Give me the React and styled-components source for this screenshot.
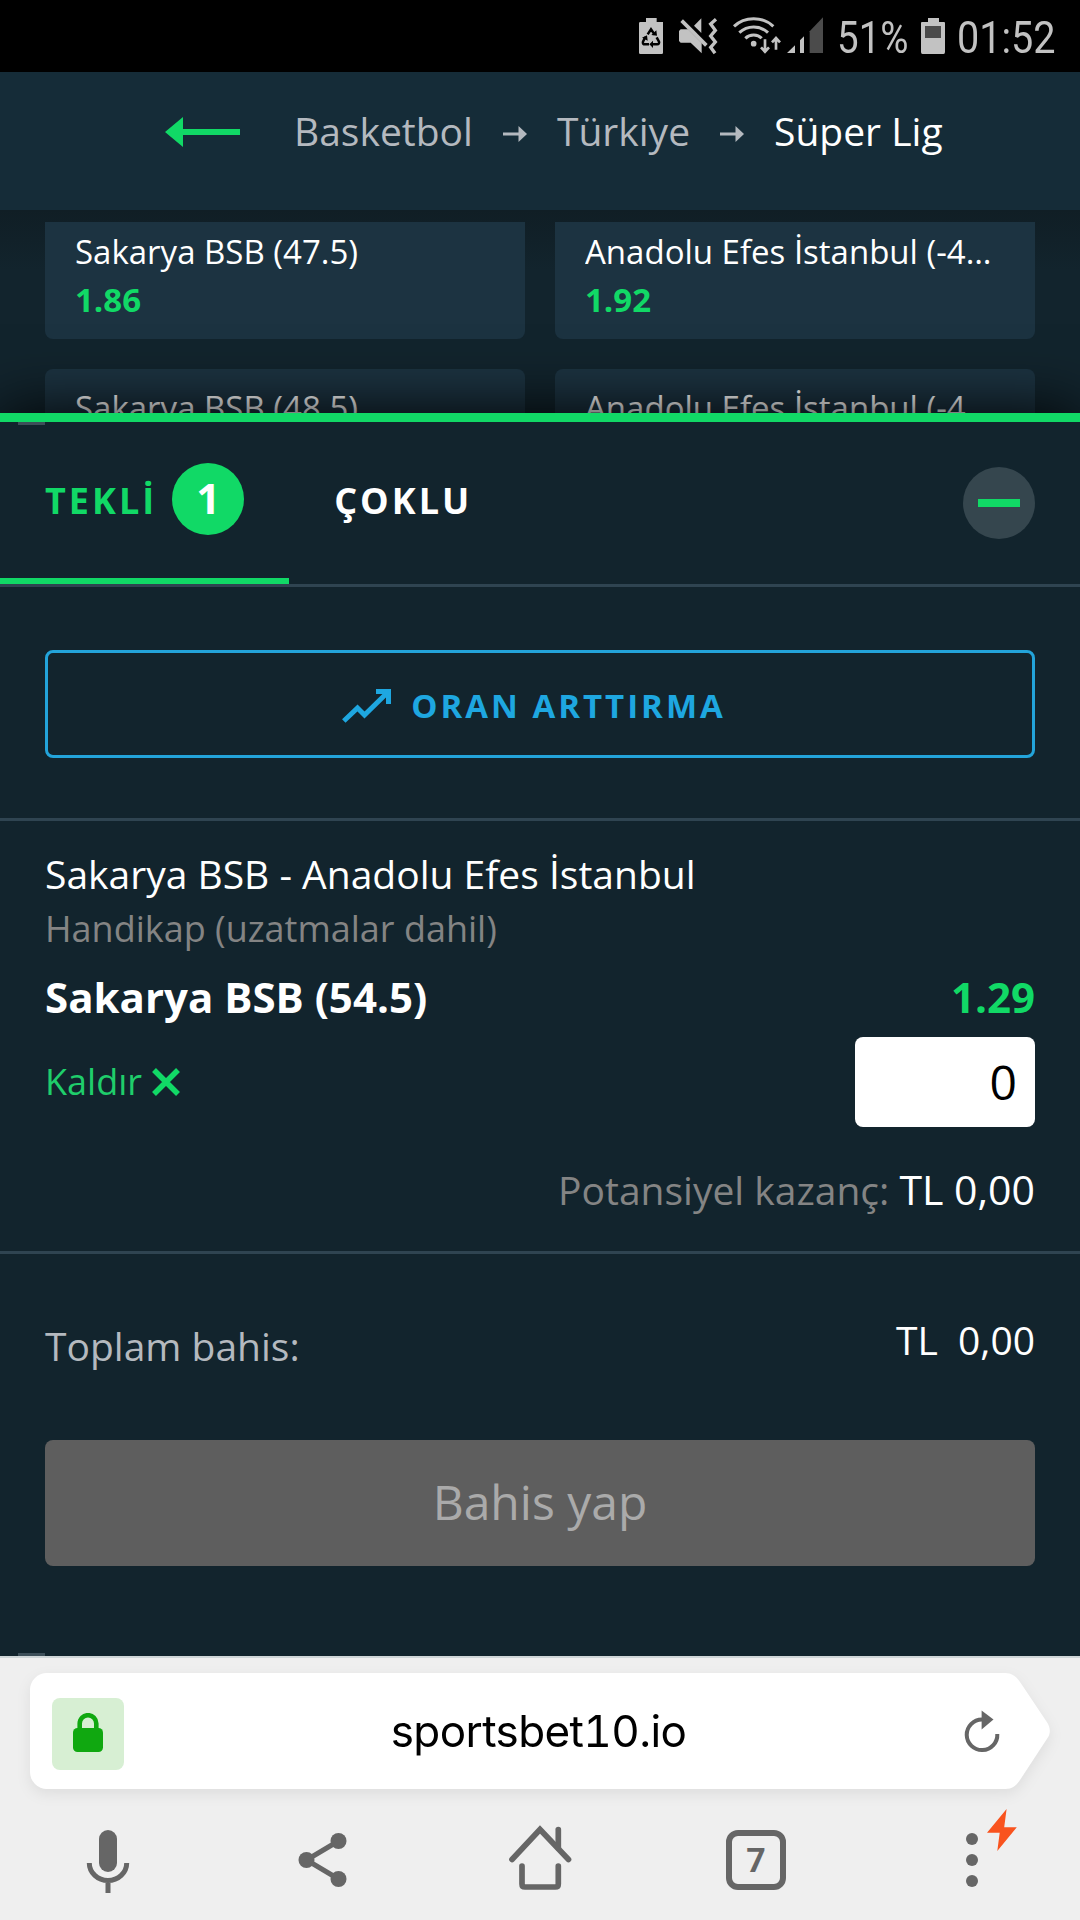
import React from 'react'
import styled, { createGlobalStyle } from 'styled-components'

const GlobalStyle = createGlobalStyle`
* {
  box-sizing: border-box;
}
body {
  margin: 0;
  background: #12242d;
  font-family: 'Open Sans', 'Noto Sans', sans-serif;
}
`

const odds = [
  { name: 'Sakarya BSB (47.5)', value: '1.86' },
  { name: 'Anadolu Efes İstanbul (-47.5)', value: '1.92' },
  { name: 'Sakarya BSB (48.5)', value: '1.82' },
  { name: 'Anadolu Efes İstanbul (-48.5)', value: '1.96' },
]

function StatusIcons() {
  return (
    <svg width="186" height="72" viewBox="54 0 558 216" fill="#c2c2c2">
      <path d="M78 54H110V66H129V158Q129 162 125 162H61Q57 162 57 158V70Q57 66 61 66H78Z" />
      <path
        d="M83 103L93 88L104 104M76 111L69 125Q67 133 75 133H87M98 133H111Q119 132 117 125L110 112"
        fill="none"
        stroke="#000"
        strokeWidth="7.5"
      />
      <path fill="#000" d="M94 105L111 107L109 91ZM99 122V144L88 133ZM66 113L81 106L83 122Z" />
      <path d="M222 77L244 55V99Z" />
      <path d="M185 62L259 136" stroke="#c2c2c2" strokeWidth="11" />
      <path d="M177 93L182 88H204L245 129V160L212 128H182L177 123Z" />
      <path d="M288 58L272 72L286 91L272 108L286 126L272 142L285 160" fill="none" stroke="#c2c2c2" strokeWidth="10" />
      <g fill="none" stroke="#c2c2c2" strokeWidth="9">
        <path d="M342 79Q366 56 401 56Q436 56 460 79" />
        <path d="M358 98Q376 81 401 81Q426 81 444 98" />
        <path d="M376 115Q386 105 401 105Q416 105 425 115" />
      </g>
      <circle cx="401" cy="131" r="8.5" />
      <path d="M435 118V154M423 142L435 155L447 142" fill="none" stroke="#c2c2c2" strokeWidth="8" />
      <path d="M468 149V114M456 127L468 114L480 127" fill="none" stroke="#c2c2c2" strokeWidth="8" />
      <path d="M501 159L525 136V159ZM540 121L552 109V159H540Z" />
      <path d="M569 94L609 52V159H569Z" fill="#4b4b4b" />
    </svg>
  )
}

function BatteryIcon() {
  return (
    <svg width="24" height="36" viewBox="0 0 24 36">
      <path d="M7 0H18V4H23Q24 4 24 5V34Q24 36 22.500 36H1.500Q0 36 0 34V5Q0 4 1 4H7Z" fill="#c2c2c2" />
      <path d="M4 8H20V20H4Z" fill="#4b4b4b" />
    </svg>
  )
}

function BackArrow() {
  return (
    <svg width="75" height="30" viewBox="0 0 75 30" fill="#11d966">
      <path d="M0 15L18 0V12H75V18H18V30Z" />
    </svg>
  )
}

function CrumbArrow() {
  return (
    <svg width="24" height="16" viewBox="0 0 24 16" fill="#b4b9bf">
      <path d="M0 6.500H15.500V0L24 8L15.500 16V9.500H0Z" />
    </svg>
  )
}

function TrendIcon() {
  return (
    <svg width="49" height="34" viewBox="0 0 49 34">
      <path d="M1.800 32L15.500 19L22.500 26L46 3" fill="none" stroke="#1ea7e0" strokeWidth="5" />
      <path d="M34 0H49V15H44V8.500L40.500 5H34Z" fill="#1ea7e0" />
    </svg>
  )
}

function CrossIcon() {
  return (
    <svg width="28" height="28" viewBox="0 0 28 28">
      <path d="M2 2L26 26M26 2L2 26" stroke="#11d966" strokeWidth="5.500" />
    </svg>
  )
}

function LockIcon() {
  return (
    <svg width="30" height="39" viewBox="0 0 30 39">
      <path d="M6.700 16V10.500A8.300 8.300 0 0 1 23.300 10.500V16" fill="none" stroke="#10a810" strokeWidth="4.600" />
      <rect y="15" width="30" height="24" rx="4.500" fill="#10a810" />
    </svg>
  )
}

function ReloadIcon() {
  return (
    <svg width="36" height="44" viewBox="0 0 36 44">
      <path d="M18 9.500A15.300 15.300 0 1 0 33.300 24" fill="none" stroke="#666" strokeWidth="4" />
      <path d="M17.600 0.500L29.500 9.500L17.600 19.500Z" fill="#666" />
    </svg>
  )
}

function MicIcon() {
  return (
    <svg width="72" height="72" viewBox="0 0 72 72">
      <rect x="27" y="6" width="18" height="42" rx="9" fill="#666" />
      <path d="M17.300 39A18.700 17.500 0 0 0 54.700 39M36 57V69" fill="none" stroke="#666" strokeWidth="5" />
    </svg>
  )
}

function ShareIcon() {
  return (
    <svg width="72" height="72" viewBox="0 0 72 72" fill="#666">
      <path d="M50.500 17L18.500 36L50.500 55" fill="none" stroke="#666" strokeWidth="5" />
      <circle cx="50.500" cy="17" r="8" />
      <circle cx="18.500" cy="36" r="8" />
      <circle cx="50.500" cy="55" r="8" />
    </svg>
  )
}

function HomeIcon() {
  return (
    <svg width="72" height="72" viewBox="0 0 72 72">
      <g fill="none" stroke="#666" strokeWidth="5.700" strokeLinecap="round">
        <path d="M8 35.500L36 5.500L64.500 35.500" />
        <path d="M54.300 5.500V24" />
        <path d="M18 42V60Q18 63 21 63H51.300Q54.300 63 54.300 60V42" />
      </g>
    </svg>
  )
}

function DotsIcon() {
  return (
    <svg width="12" height="54" viewBox="0 0 12 54" fill="#666">
      <circle cx="6" cy="6" r="6" />
      <circle cx="6" cy="27" r="6" />
      <circle cx="6" cy="48" r="6" />
    </svg>
  )
}

function BoltIcon() {
  return (
    <svg width="30" height="42" viewBox="0 0 30 42">
      <path d="M19.600 0L0 23.700H12.700L10.300 42L29.800 18.300H17.200Z" fill="#f9531e" />
    </svg>
  )
}

export default function App() {
  return (
    <Screen>
      <GlobalStyle />
      <StatusBar>
        <StatusIcons />
        <StatusText $width={84} $scale={0.865}>51%</StatusText>
        <BatteryIcon />
        <StatusText $width={112} $scale={0.89}>01:52</StatusText>
      </StatusBar>

      <Header>
        <BackArrow />
        <Breadcrumb>
          <Crumb>Basketbol</Crumb>
          <CrumbArrow />
          <Crumb>Türkiye</Crumb>
          <CrumbArrow />
          <Crumb $active>Süper Lig</Crumb>
        </Breadcrumb>
      </Header>

      <OddsArea>
        <OddsGrid>
          {odds.map((o) => (
            <OddsCard key={o.name}>
              <OddsName>{o.name}</OddsName>
              <OddsValue>{o.value}</OddsValue>
            </OddsCard>
          ))}
        </OddsGrid>
      </OddsArea>

      <BetSlip>
        <Tabs>
          <Tab $active>
            TEKLİ
            <Badge>1</Badge>
          </Tab>
          <Tab>ÇOKLU</Tab>
          <Minimize><span /></Minimize>
        </Tabs>

        <BoostSection>
          <BoostButton>
            <TrendIcon />
            ORAN ARTTIRMA
          </BoostButton>
        </BoostSection>

        <Selection>
          <Match>Sakarya BSB - Anadolu Efes İstanbul</Match>
          <Market>Handikap (uzatmalar dahil)</Market>
          <Pick>
            <span>Sakarya BSB (54.5)</span>
            <PickOdds>1.29</PickOdds>
          </Pick>
          <StakeRow>
            <Remove>
              Kaldır
              <CrossIcon />
            </Remove>
            <Stake defaultValue="0" />
          </StakeRow>
          <Potential>
            Potansiyel kazanç: <b>TL 0,00</b>
          </Potential>
        </Selection>

        <Summary>
          <TotalRow>
            <TotalLabel>Toplam bahis:</TotalLabel>
            <Total>TL&nbsp; 0,00</Total>
          </TotalRow>
          <PlaceBet>Bahis yap</PlaceBet>
        </Summary>
      </BetSlip>

      <Browser>
        <AddressBar>
          <AddressBody>
            <LockTile><LockIcon /></LockTile>
            <Url>sportsbet10.io</Url>
          </AddressBody>
          <svg width="50" height="116" viewBox="0 0 50 116" fill="#fff">
            <path d="M0 0H5C11 0 16 3 20 9L47.500 50C50.500 55 50.500 61 47.500 65L20 107C16 113 12 116 5 116H0Z" />
          </svg>
          <Reload><ReloadIcon /></Reload>
        </AddressBar>
        <NavBar>
          <NavItem><MicIcon /></NavItem>
          <NavItem><ShareIcon /></NavItem>
          <NavItem><HomeIcon /></NavItem>
          <NavItem><TabCount>7</TabCount></NavItem>
          <NavItem>
            <DotsIcon />
            <BoltMark><BoltIcon /></BoltMark>
          </NavItem>
        </NavBar>
      </Browser>
    </Screen>
  )
}

const Screen = styled.main`
width: 1080px;
height: 1920px;
overflow: hidden;
display: flex;
flex-direction: column;
background: #12242d;
color: #fff;

svg {
  display: block;
  flex: none;
}
`
const StatusBar = styled.div`
height: 72px;
flex: none;
display: flex;
align-items: center;
padding-left: 638px;
background: #000;
`
const StatusText = styled.span`
font: 44.500px/44px Roboto, sans-serif;
color: #c2c2c2;
white-space: nowrap;
flex: none;
width: ${(p) => p.$width}px;
margin: 4px 0 0 13px;
transform: scaleX(${(p) => p.$scale});
transform-origin: left center;

&:last-child {
  margin-left: 12px;
}
`
const Header = styled.header`
height: 138px;
flex: none;
display: flex;
align-items: center;
padding: 0 0 19px 165px;
background: #152c38;
`
const Breadcrumb = styled.nav`
display: flex;
align-items: center;
gap: 30px;
margin: -2px 0 0 54px;

svg {
  margin-top: 6px;
}
`
const Crumb = styled.span`
font-size: 39px;
line-height: 54px;
white-space: nowrap;
color: ${(p) => (p.$active ? '#fff' : '#b4b9bf')};
`
const OddsArea = styled.section`
height: 203px;
flex: none;
padding-top: 12px;
background: linear-gradient(#101e25, #12242d 60px);
`
const OddsGrid = styled.div`
height: 191px;
overflow: hidden;
display: grid;
grid-template-columns: 480px 480px;
grid-auto-rows: 126px;
gap: 30px;
padding: 0 45px;
`
const OddsCard = styled.div`
height: 126px;
margin-top: -9px;
padding: 15px 30px;
border-radius: 8px;
background: #1c3341;
`
const OddsName = styled.div`
font-size: 33px;
line-height: 48px;
white-space: nowrap;
overflow: hidden;
text-overflow: ellipsis;
`
const OddsValue = styled.div`
font-size: 33px;
line-height: 48px;
font-weight: 700;
color: #11d966;
`
const BetSlip = styled.section`
position: relative;
height: 1243px;
flex: none;
border-top: 9px solid #11d966;
background: #12242d;
box-shadow: 0 0 60px #000;

&::before,
&::after {
  content: '';
  position: absolute;
  left: 18px;
  width: 27px;
  height: 3px;
  background: #3d4f59;
}
&::before {
  top: 0;
}
&::after {
  bottom: 0;
}
`
const Tabs = styled.div`
height: 165px;
display: flex;
align-items: center;
padding-right: 45px;
border-bottom: 3px solid #2f4451;
`
const Tab = styled.div`
height: 162px;
display: flex;
align-items: center;
padding: 0 45px;
font-size: 36px;
font-weight: 700;
letter-spacing: 3px;
color: ${(p) => (p.$active ? '#11d966' : '#fff')};
border-bottom: 6px solid ${(p) => (p.$active ? '#11d966' : 'transparent')};
`
const Badge = styled.span`
width: 72px;
height: 72px;
margin: -2px 0 0 15px;
border-radius: 50%;
background: #11d966;
color: #fff;
font-size: 42px;
line-height: 69px;
letter-spacing: 0;
text-align: center;
`
const Minimize = styled.button`
width: 72px;
height: 72px;
margin-left: auto;
padding: 0;
display: flex;
align-items: center;
justify-content: center;
border: 0;
border-radius: 50%;
background: #35464e;

span {
  width: 42px;
  height: 8px;
  background: #11d966;
}
`
const BoostSection = styled.div`
padding: 63px 45px 60px;
border-bottom: 3px solid #2f4451;
`
const BoostButton = styled.button`
width: 100%;
height: 108px;
display: flex;
align-items: center;
justify-content: center;
gap: 20px;
padding: 4px 12px 0 0;
border: 3px solid #23a4da;
border-radius: 8px;
background: none;
color: #1ea7e0;
font: 700 33px/48px 'Open Sans', sans-serif;
letter-spacing: 3px;
`
const Selection = styled.div`
height: 433px;
padding: 26px 45px 0;
border-bottom: 3px solid #2f4451;
`
const Match = styled.div`
font-size: 39px;
line-height: 54px;
`
const Market = styled.div`
margin-top: 1px;
font-size: 36px;
line-height: 54px;
color: #848484;
`
const Pick = styled.div`
display: flex;
justify-content: space-between;
margin-top: 11px;
font-size: 42px;
line-height: 60px;
font-weight: 700;
`
const PickOdds = styled.span`
color: #11d966;
`
const StakeRow = styled.div`
display: flex;
align-items: center;
justify-content: space-between;
margin-top: 10px;
`
const Remove = styled.span`
display: flex;
align-items: center;
gap: 10px;
font-size: 36px;
line-height: 54px;
color: #1fce6b;
`
const Stake = styled.input`
width: 180px;
height: 90px;
padding: 0 18px 2px;
border: 0;
border-radius: 8px;
background: #fff;
color: #000;
font: 48px 'Open Sans', sans-serif;
text-align: right;
`
const Potential = styled.div`
margin-top: 36px;
font-size: 39px;
line-height: 54px;
text-align: right;
color: #848484;

b {
  font-size: 41px;
  font-weight: 400;
  line-height: 1;
  color: #fff;
}
`
const Summary = styled.div`
padding: 59px 45px 0;
`
const TotalRow = styled.div`
display: flex;
justify-content: space-between;
font-size: 39px;
line-height: 54px;
`
const TotalLabel = styled.span`
padding-top: 6px;
color: #b4b9bf;
`
const Total = styled.span`
color: #fff;
`
const PlaceBet = styled.button`
width: 100%;
height: 126px;
margin-top: 67px;
padding: 0 0 4px;
border: 0;
border-radius: 8px;
background: #5e5e5e;
color: #aaa;
font: 48px 'Open Sans', sans-serif;
`
const Browser = styled.footer`
position: relative;
height: 264px;
flex: none;
padding: 15px 30px 0;
border-top: 2px solid #cfd6d8;
background: #efefef;
`
const AddressBar = styled.div`
position: relative;
display: flex;
filter: drop-shadow(0 5px 7px rgba(0, 0, 0, 0.07));
`
const AddressBody = styled.div`
width: 970px;
height: 116px;
display: flex;
align-items: center;
padding-left: 22px;
border-radius: 17px 0 0 17px;
background: #fff;
`
const LockTile = styled.div`
width: 72px;
height: 72px;
display: flex;
align-items: center;
justify-content: center;
margin-top: 6px;
padding-bottom: 3px;
border-radius: 8px;
background: #d7efd3;
`
const Url = styled.div`
width: 829px;
padding: 0 0 1px;
text-align: center;
color: #000;
font: 44px/60px Inter, sans-serif;
font-feature-settings: 'tnum';
letter-spacing: -0.6px;
`
const Reload = styled.div`
position: absolute;
left: 934px;
top: 37px;
`
const NavBar = styled.div`
display: flex;
margin: 20px -30px 0;
height: 102px;
`
const NavItem = styled.div`
position: relative;
flex: 1;
display: flex;
align-items: center;
justify-content: center;
`
const TabCount = styled.div`
width: 60px;
height: 60px;
border: 6px solid #666;
border-radius: 12px;
color: #666;
font: 700 34px/49px Roboto, sans-serif;
text-align: center;
`
const BoltMark = styled.div`
position: absolute;
left: 123px;
top: 0;
`
